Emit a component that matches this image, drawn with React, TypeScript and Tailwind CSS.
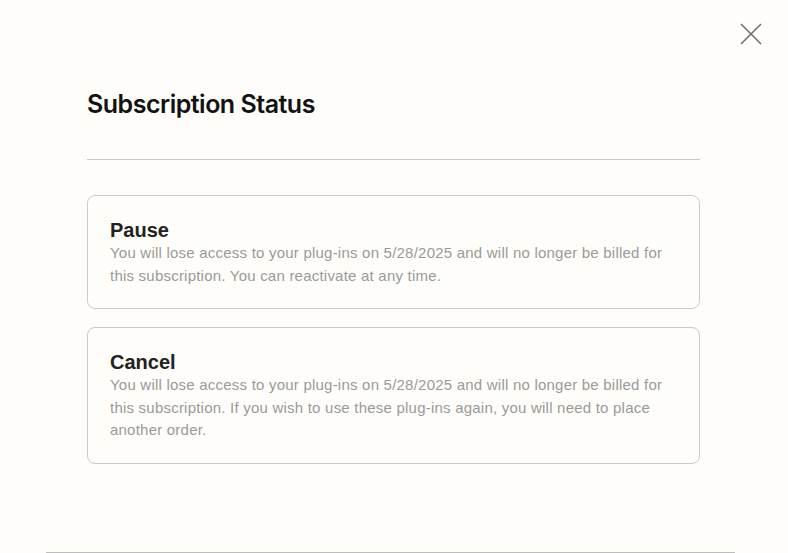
import React from "react";

const cards = [
  {
    title: "Pause",
    text: "You will lose access to your plug-ins on 5/28/2025 and will no longer be billed for this subscription. You can reactivate at any time.",
  },
  {
    title: "Cancel",
    text: "You will lose access to your plug-ins on 5/28/2025 and will no longer be billed for this subscription. If you wish to use these plug-ins again, you will need to place another order.",
  },
];

export default function App() {
  return (
    <div className="relative flex h-[553px] w-full flex-col overflow-hidden bg-[#fefdf9]">
      <button
        aria-label="Close"
        className="absolute right-[26px] top-[23px] flex h-[22px] w-[22px] items-center justify-center"
      >
        <svg width="22" height="22" viewBox="0 0 22 22" fill="none">
          <path d="M1 1L21 21M21 1L1 21" stroke="#6b6b6b" strokeWidth="1.5" />
        </svg>
      </button>
      <div className="pl-[87px] pr-[88px] pt-[88px]">
        <h1 className="font-['Inter','Liberation_Sans',sans-serif] text-[25px] leading-[32px] font-semibold tracking-[-0.02em] text-[#121212]">
          Subscription Status
        </h1>
        <div className="mt-[39px] h-px bg-[#c8c8c8]" />
        <div className="mt-[35px] flex flex-col gap-[18px]">
          {cards.map((c) => (
            <div
              key={c.title}
              className="rounded-[8px] border border-[#cacaca] px-[22px] pt-[22px] pb-[21px] font-['Liberation_Sans',Arial,sans-serif]"
            >
              <div className="text-[20px] leading-[24px] font-bold text-[#222222]">{c.title}</div>
              <p className="text-[15px] leading-[22.5px] tracking-[0.22px] text-[#9a9a9a]">{c.text}</p>
            </div>
          ))}
        </div>
      </div>
      <div className="mt-auto ml-[46px] h-px w-[689px] bg-[#bdbdbd]" />
    </div>
  );
}
